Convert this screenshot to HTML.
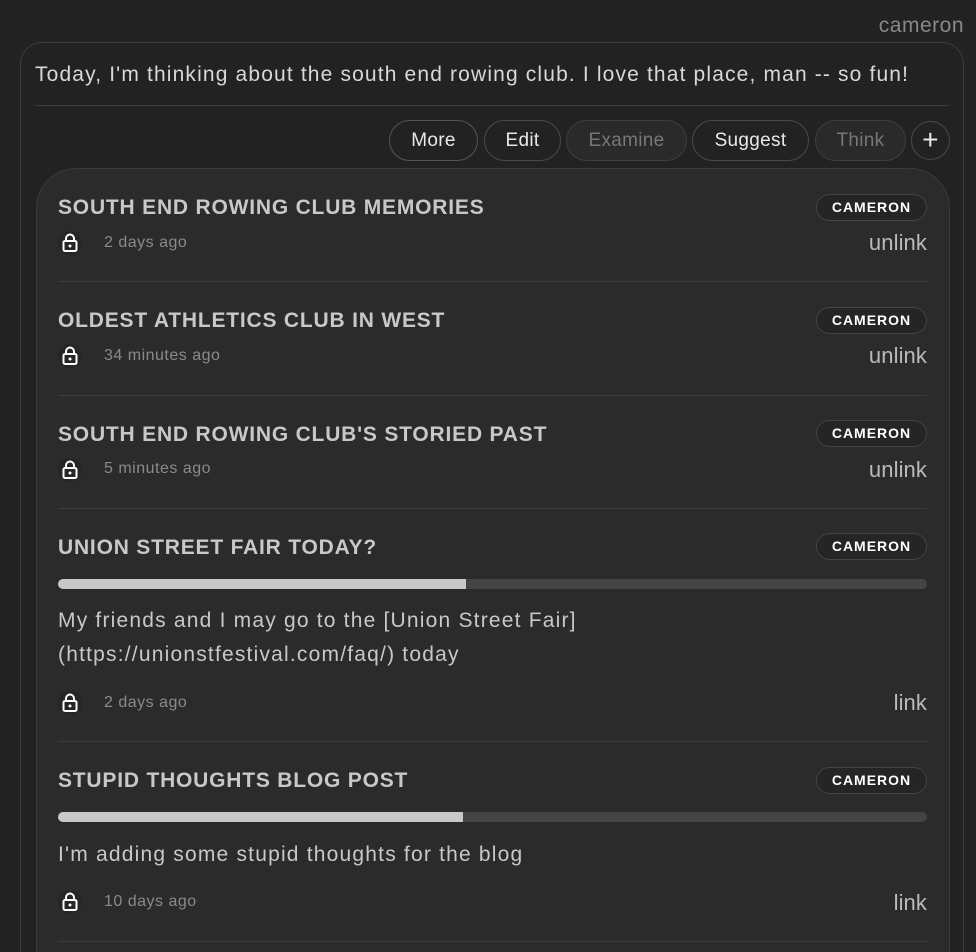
<!DOCTYPE html>
<html style="width:976px;height:952px;overflow:hidden"><head><style>
*{box-sizing:border-box;margin:0;padding:0}
body{width:976px;height:952px;background:#222;overflow:hidden;position:relative;font-family:"Liberation Sans",sans-serif;color:#d8d8d8}
.a{position:absolute;white-space:nowrap}
.outer{position:absolute;left:20px;top:42px;width:944px;height:940px;border:1px solid #3d3d3d;border-radius:22px;background:#222}
.inner{position:absolute;left:36px;top:168px;width:914px;height:820px;border:1px solid #3a3a3a;border-radius:40px;background:#2b2b2b}
.btn{position:absolute;top:120px;height:41px;border:1.5px solid #4a4a4a;border-radius:21px;font-size:19px;line-height:40px;text-align:center;color:#e8e8e8;background:#222;letter-spacing:.3px}
.dim{color:#777;background:#2a2a2a;border-color:#3e3e3e}
.title{position:absolute;left:58px;font-weight:bold;font-size:21px;letter-spacing:.8px;color:#c8c8c8;text-transform:uppercase;white-space:nowrap}
.tag{position:absolute;left:816px;width:111px;height:27px;border:1px solid #444;border-radius:14px;font-size:14px;font-weight:bold;letter-spacing:1px;color:#fff;text-align:center;line-height:25px;background:#252525}
.lock{position:absolute;left:58px;width:24px;height:24px}
.time{position:absolute;left:104px;font-size:16px;color:#8a8a8a;letter-spacing:.5px;white-space:nowrap}
.lk{position:absolute;right:49px;font-size:22px;color:#bbb;letter-spacing:.1px}
.sep{position:absolute;left:58px;width:869px;height:1px;background:#3c3c3c}
.bar{position:absolute;left:58px;width:869px;height:10px;border-radius:5px;background:#444;overflow:hidden}
.bar i{display:block;height:100%;background:#c8c8c8}
.body{position:absolute;left:58px;font-size:21px;line-height:34px;color:#c8c8c8;letter-spacing:1.2px;white-space:nowrap}
</style></head><body>
<div class="a" style="right:12px;top:14px;font-size:21px;color:#888;letter-spacing:.5px">cameron</div>
<div class="outer"></div>
<div class="a" style="left:35px;top:63px;font-size:21px;color:#d8d8d8;letter-spacing:1.15px">Today, I'm thinking about the south end rowing club. I love that place, man -- so fun!</div>
<div class="a" style="left:35px;top:105px;width:914px;height:1px;background:#3c3c3c"></div>
<div class="btn" style="left:389px;width:89px;border-color:#555">More</div>
<div class="btn" style="left:484px;width:77px">Edit</div>
<div class="btn dim" style="left:566px;width:121px">Examine</div>
<div class="btn" style="left:692px;width:117px">Suggest</div>
<div class="btn dim" style="left:815px;width:91px">Think</div>
<div class="btn" style="left:911px;width:39px;top:121px;height:39px;font-size:28px;line-height:36px">+</div>
<div class="inner"></div>

<svg width="0" height="0" style="position:absolute"><symbol id="lk" viewBox="0 0 24 24"><circle cx="12" cy="12" r="12" fill="#262626"/><rect x="5.5" y="10" width="13" height="10" rx="1.5" fill="none" stroke="#fff" stroke-width="2"/><path d="M8 10V7.5a4 4 0 0 1 8 0V10" fill="none" stroke="#fff" stroke-width="2"/><circle cx="12" cy="15" r="1.5" fill="#fff"/></symbol></svg>

<div class="title" style="top:196px">South End Rowing Club Memories</div>
<div class="tag" style="top:194px">CAMERON</div>
<svg class="lock" style="top:231px"><use href="#lk"/></svg>
<div class="time" style="top:234px">2 days ago</div>
<div class="lk" style="top:230px">unlink</div>
<div class="sep" style="top:281px"></div>

<div class="title" style="top:309px">Oldest Athletics Club in West</div>
<div class="tag" style="top:307px">CAMERON</div>
<svg class="lock" style="top:344px"><use href="#lk"/></svg>
<div class="time" style="top:347px">34 minutes ago</div>
<div class="lk" style="top:343px">unlink</div>
<div class="sep" style="top:395px"></div>

<div class="title" style="top:423px">South End Rowing Club's Storied Past</div>
<div class="tag" style="top:420px">CAMERON</div>
<svg class="lock" style="top:458px"><use href="#lk"/></svg>
<div class="time" style="top:460px">5 minutes ago</div>
<div class="lk" style="top:457px">unlink</div>
<div class="sep" style="top:508px"></div>

<div class="title" style="top:536px">Union Street Fair Today?</div>
<div class="tag" style="top:533px">CAMERON</div>
<div class="bar" style="top:579px"><i style="width:408px"></i></div>
<div class="body" style="top:604px">My friends and I may go to the [Union Street Fair]<br>(https://unionstfestival.com/faq/) today</div>
<svg class="lock" style="top:691px"><use href="#lk"/></svg>
<div class="time" style="top:694px">2 days ago</div>
<div class="lk" style="top:690px">link</div>
<div class="sep" style="top:741px"></div>

<div class="title" style="top:769px">Stupid Thoughts Blog Post</div>
<div class="tag" style="top:767px">CAMERON</div>
<div class="bar" style="top:812px"><i style="width:405px"></i></div>
<div class="body" style="top:838px">I'm adding some stupid thoughts for the blog</div>
<svg class="lock" style="top:890px"><use href="#lk"/></svg>
<div class="time" style="top:893px">10 days ago</div>
<div class="lk" style="top:890px">link</div>
<div class="sep" style="top:941px"></div>
</body></html>
